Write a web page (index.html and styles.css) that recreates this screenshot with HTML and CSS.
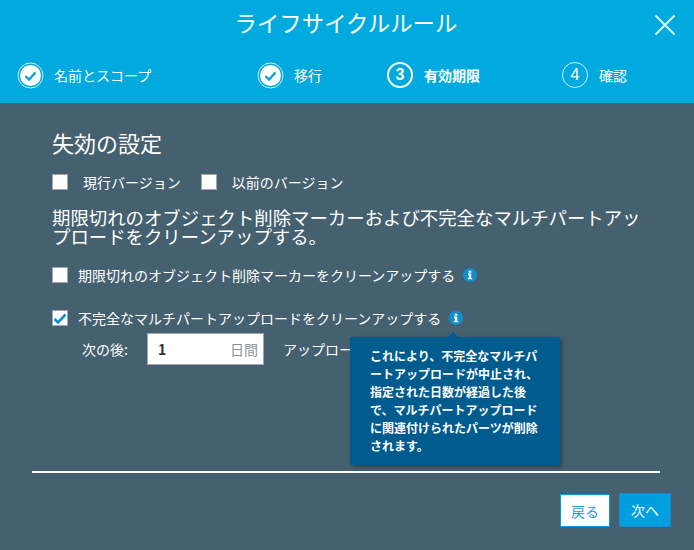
FILE: index.html
```html
<!DOCTYPE html>
<html lang="ja">
<head>
<meta charset="utf-8">
<title>ライフサイクルルール</title>
<link rel="stylesheet" href="styles.css">
</head>
<body>
<div class="modal">
  <header class="header">
    <div class="title-row">
      <h1 class="title">ライフサイクルルール</h1>
      <svg class="close" width="22" height="22" viewBox="0 0 22 22"><path d="M1.5 1.5L20.5 20.5M20.5 1.5L1.5 20.5" stroke="#fff" stroke-width="2" fill="none" opacity=".85"/></svg>
    </div>
    <ol class="steps">
      <li class="step">
        <svg class="step-icon" width="27" height="27" viewBox="0 0 27 27"><circle cx="13.5" cy="13.5" r="12.5" fill="none" stroke="#fff" stroke-width="1" opacity=".8"/><circle cx="13.5" cy="13.5" r="10.5" fill="#fff"/><path d="M8.5 14l3.5 3.5 6.5-7" fill="none" stroke="#0a9fd8" stroke-width="2.4"/></svg>
        <span>名前とスコープ</span>
      </li>
      <li class="step">
        <svg class="step-icon" width="27" height="27" viewBox="0 0 27 27"><circle cx="13.5" cy="13.5" r="12.5" fill="none" stroke="#fff" stroke-width="1" opacity=".8"/><circle cx="13.5" cy="13.5" r="10.5" fill="#fff"/><path d="M8.5 14l3.5 3.5 6.5-7" fill="none" stroke="#0a9fd8" stroke-width="2.4"/></svg>
        <span>移行</span>
      </li>
      <li class="step step-current">
        <span class="num num-current">3</span>
        <span>有効期限</span>
      </li>
      <li class="step">
        <span class="num">4</span>
        <span>確認</span>
      </li>
    </ol>
  </header>
  <main class="body">
    <h2 class="heading">失効の設定</h2>
    <div class="versions">
      <label class="check"><span class="box"></span><span class="wide-label">現行バージョン</span></label>
      <label class="check"><span class="box"></span><span class="wide-label">以前のバージョン</span></label>
    </div>
    <p class="section">期限切れのオブジェクト削除マーカーおよび不完全なマルチパートアップロードをクリーンアップする。</p>
    <div class="option option-first">
      <span class="box"></span>
      <span class="opt-label">期限切れのオブジェクト削除マーカーをクリーンアップする</span>
      <svg class="info" width="14" height="14" viewBox="0 0 14 14"><circle cx="7" cy="7" r="7" fill="#0f8fd0"/><path d="M5.6 2.8h2.7v1.9H5.6zM5 5.6h3.2v4.3h1v1.4H4.9V9.9h.9V7H5z" fill="#fff"/></svg>
    </div>
    <div class="option option-second">
      <span class="box"><svg width="14" height="11" viewBox="0 0 14 11"><path d="M1.5 6l3.5 3.5 7.5-8" fill="none" stroke="#0f8fd0" stroke-width="2.6"/></svg></span>
      <span class="opt-label">不完全なマルチパートアップロードをクリーンアップする</span>
      <svg class="info" width="14" height="14" viewBox="0 0 14 14"><circle cx="7" cy="7" r="7" fill="#0f8fd0"/><path d="M5.6 2.8h2.7v1.9H5.6zM5 5.6h3.2v4.3h1v1.4H4.9V9.9h.9V7H5z" fill="#fff"/></svg>
    </div>
    <div class="days">
      <span class="days-label">次の後:</span>
      <div class="input"><b class="value">1</b><span class="unit">日間</span></div>
      <span class="after">アップロー</span>
    </div>
    <div class="tooltip">これにより、不完全なマルチパートアップロードが中止され、指定された日数が経過した後で、マルチパートアップロードに関連付けられたパーツが削除されます。</div>
  </main>
  <footer class="footer">
    <hr class="rule">
    <div class="actions">
      <button class="btn btn-back">戻る</button>
      <button class="btn btn-next">次へ</button>
    </div>
  </footer>
</div>
</body>
</html>
```
FILE: styles.css
```css
* { box-sizing: border-box; }
html, body { margin: 0; height: 100%; }
body {
  background: #456170;
  color: #fff;
  font-family: "Noto Sans CJK JP", "Noto Sans", sans-serif;
  overflow: hidden;
}
.modal { width: 694px; height: 550px; display: flex; flex-direction: column; }
.header { background: #00aade; height: 103px; padding-left: 17px; flex: none; }
.title-row { height: 61px; position: relative; display: flex; justify-content: center; }
.title { margin: 7px 0 0 -19px; font-size: 22.4px; font-weight: 400; line-height: 30px; }
.close { position: absolute; right: 18px; top: 14px; }
.steps { list-style: none; margin: 0; padding: 0; display: grid; grid-template-columns: 240px 130px 175px 1fr; height: 30px; }
.step { display: flex; align-items: center; gap: 10px; font-size: 14px; height: 30px; padding-bottom: 2px; }
.step-current { font-weight: 700; }
.step-icon { flex: none; }
.num { width: 26px; height: 26px; border: 1px solid rgba(255,255,255,.8); border-radius: 50%; display: flex; align-items: center; justify-content: center; font: 400 16px/1 "Liberation Sans", sans-serif; flex: none; margin-right: 1px; }
.num-current { border: 2px solid #fff; font-weight: 700; }
.body { position: relative; flex: 1; padding: 24px 0 0 52px; }
.heading { margin: 0; font-size: 22px; font-weight: 400; line-height: 30px; }
.versions { display: flex; margin-top: 15px; height: 20px; align-items: center; }
.check { display: flex; align-items: center; font-size: 14px; margin-right: 20px; }
.box { width: 16px; height: 16px; background: #fff; border: 1px solid #a0a8ae; display: flex; align-items: center; justify-content: center; flex: none; }
.wide-label { margin-left: 15px; }
.section { margin: 16px 0 0; font-size: 18.4px; line-height: 19px; width: 600px; }
.option { display: flex; align-items: center; height: 20px; font-size: 14px; }
.option-first { margin-top: 19px; }
.option-second { margin-top: 23px; }
.opt-label { margin-left: 10px; }
.info { margin-left: 8px; flex: none; }
.days { display: flex; align-items: center; margin-top: 5px; padding-left: 30px; font-size: 14px; height: 32px; }
.days-label { width: 65px; }
.input { width: 117px; height: 32px; background: #fff; border: 1px solid #a0a8ae; display: flex; align-items: center; justify-content: space-between; padding: 0 5px 0 10px; color: #333; }
.value { font-size: 14px; }
.unit { color: #8a9299; }
.after { margin-left: 19px; white-space: nowrap; }
.tooltip {
  position: absolute; left: 350px; top: 234px; width: 210px; height: 128px;
  background: #005c8f; padding: 10px 20px 0; font-size: 12px; font-weight: 700; line-height: 18px;
  box-shadow: 2px 2px 4px rgba(0,0,0,.35);
}
.tooltip::before {
  content: ""; position: absolute; left: 98px; top: -5px;
  border-left: 5px solid transparent; border-right: 5px solid transparent; border-bottom: 5px solid #005c8f;
}
.footer { flex: none; height: 79px; }
.rule { margin: 0 0 0 32px; width: 628px; height: 2px; border: 0; background: #fff; }
.actions { display: flex; justify-content: flex-end; align-items: flex-start; gap: 9px; padding: 20px 23px 0 0; }
.btn { height: 34px; font: 400 14px "Noto Sans CJK JP", sans-serif; padding: 0; }
.btn-back { width: 50px; height: 33px; margin-top: 1px; background: #fff; border: 1px solid #00a0e0; color: #2a9ad6; }
.btn-next { width: 52px; background: #00a0e0; border: 1px solid #1a86cf; color: #fff; border-radius: 1px; }
```
